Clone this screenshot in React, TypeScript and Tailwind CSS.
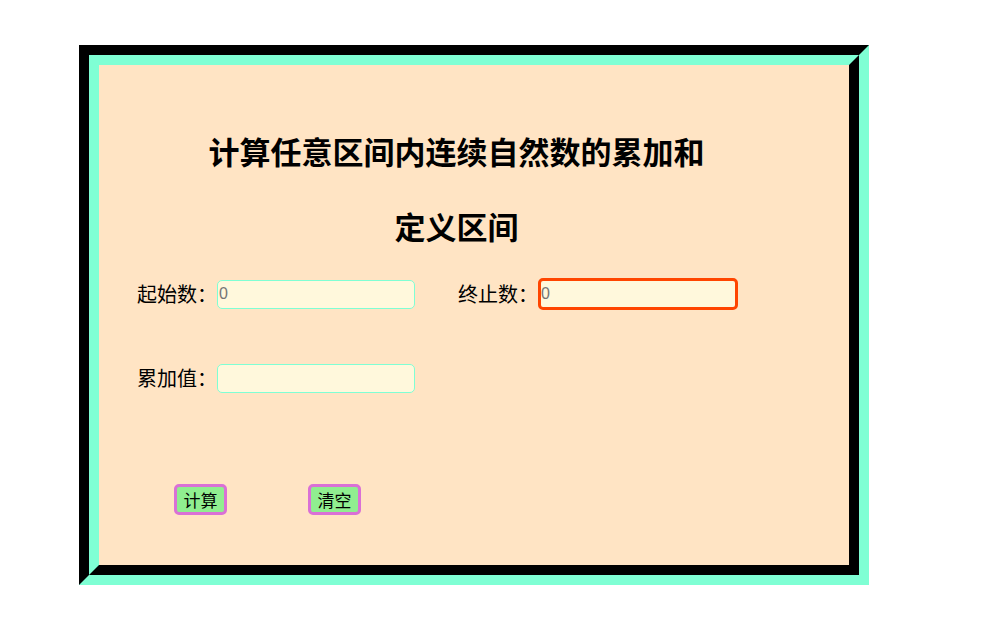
import React from "react";

export default function App() {
  const font = { fontFamily: '"Noto Sans CJK SC", "Noto Sans", sans-serif' };
  return (
    <div className="min-h-screen bg-white pt-[45px] pl-[79px]" style={font}>
      <div className="w-[790px] h-[540px] border-[10px] border-t-black border-l-black border-r-[#7fffd4] border-b-[#7fffd4]">
        <div className="w-full h-full border-[10px] border-t-[#7fffd4] border-l-[#7fffd4] border-r-black border-b-black bg-[#ffe4c4] text-black">
          <div className="pr-[35px] pt-[66px]">
            <div className="h-[40px] leading-[40px] text-center text-[31px] font-bold whitespace-nowrap">
              计算任意区间内连续自然数的累加和
            </div>
            <div className="mt-[35px] h-[40px] leading-[40px] text-center text-[31px] font-bold">
              定义区间
            </div>
          </div>
          <div className="mt-[32px] pl-[38px] flex items-center h-[32px]">
            <span className="w-[80px] text-[20px] leading-[32px]">起始数：</span>
            <input
              placeholder="0"
              className="w-[198px] h-[29px] border border-[#7fffd4] rounded-[5px] bg-[#fff8dc] px-[1px] text-[16px] placeholder:text-[#757575] outline-none"
              style={{ fontFamily: '"Liberation Sans", Arial, sans-serif' }}
            />
            <span className="ml-[43px] w-[80px] text-[20px] leading-[32px]">终止数：</span>
            <input
              placeholder="0"
              className="w-[200px] h-[32px] border-[3px] border-[#ff4500] rounded-[5px] bg-[#fff8dc] px-0 text-[16px] placeholder:text-[#757575] outline-none"
              style={{ fontFamily: '"Liberation Sans", Arial, sans-serif' }}
            />
          </div>
          <div className="mt-[52px] pl-[38px] flex items-center h-[32px]">
            <span className="w-[80px] text-[20px] leading-[32px]">累加值：</span>
            <input
              className="w-[198px] h-[29px] border border-[#7fffd4] rounded-[5px] bg-[#fff8dc] px-[1px] text-[16px] outline-none"
            />
          </div>
          <div className="mt-[90px] pl-[75px] flex items-center gap-[81px]">
            <button className="w-[53px] h-[31px] border-[3px] border-[#da70d6] rounded-[5px] bg-[#90ee90] text-[17px] leading-[25px] text-black">
              计算
            </button>
            <button className="w-[53px] h-[31px] border-[3px] border-[#da70d6] rounded-[5px] bg-[#90ee90] text-[17px] leading-[25px] text-black">
              清空
            </button>
          </div>
        </div>
      </div>
    </div>
  );
}
